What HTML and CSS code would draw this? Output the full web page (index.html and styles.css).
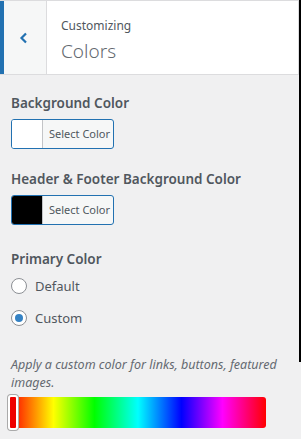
FILE: index.html
```html
<!DOCTYPE html>
<html lang="en">
<head>
<meta charset="UTF-8">
<title>Customizing Colors</title>
<link rel="stylesheet" href="styles.css">
</head>
<body>
<div class="panel">
<div class="header">
<button class="back" aria-label="Back">
<svg width="10" height="12" viewBox="0 0 10 12"><path d="M7 1.5 L2.5 6 L7 10.5" fill="none" stroke="#2271b1" stroke-width="2.2"/></svg>
</button>
<div class="title">
<span class="small">Customizing</span>
<span class="big">Colors</span>
</div>
</div>

<div class="controls">
<div class="control">
<span class="label">Background Color</span>
<button class="picker"><span class="swatch"></span><span class="pick-text">Select Color</span></button>
</div>
<div class="control wide-gap">
<span class="label">Header &amp; Footer Background Color</span>
<button class="picker"><span class="swatch black"></span><span class="pick-text">Select Color</span></button>
</div>
<div class="control radios">
<span class="label">Primary Color</span>
<label class="radio"><span class="dot"></span>Default</label>
<label class="radio"><span class="dot checked"></span>Custom</label>
</div>
<div class="control">
<p class="desc">Apply a custom color for links, buttons, featured images.</p>
<div class="hue">
<span class="handle"></span>
</div>
</div>
</div>
</div>
<div class="edge"></div>
</body>
</html>
```
FILE: styles.css
```css
body {
margin: 0;
background-color: #f0f0f1;
font-family: "Noto Sans", sans-serif;
color: #50575e;
display: flex;
height: 439px;
overflow: hidden;
}
.panel {
flex: 1;
}
.edge {
width: 2px;
height: 362px;
background-color: #000;
}
.header {
display: flex;
height: 73px;
border-top: 1px solid #dcdcde;
border-bottom: 1px solid #dcdcde;
border-right: 1px solid #dcdcde;
background-color: #fff;
}
.back {
width: 47px;
border: none;
border-left: 4px solid #2271b1;
border-right: 1px solid #dcdcde;
background-color: #f6f7f7;
display: flex;
align-items: center;
justify-content: center;
padding: 0 2px 0 0;
}
.title {
display: flex;
flex-direction: column;
padding: 16px 0 0 14px;
}
.small {
font-size: 12px;
line-height: 18px;
color: #50575e;
}
.big {
font-size: 19px;
font-weight: 300;
line-height: 33px;
color: #646970;
}
.controls {
padding: 18px 0 0 11px;
}
.control {
display: flex;
flex-direction: column;
align-items: flex-start;
margin-bottom: 20px;
}
.control.wide-gap {
margin-bottom: 24px;
}
.control.radios {
margin-bottom: 16px;
}
.label {
font-size: 13.5px;
font-weight: 600;
line-height: 20px;
margin-bottom: 6px;
color: #50575e;
}
.picker {
display: flex;
box-sizing: border-box;
height: 30px;
width: 103px;
padding: 0;
border: 1px solid #2271b1;
border-radius: 3px;
background-color: #f6f7f7;
overflow: hidden;
font-family: inherit;
}
.swatch {
width: 30px;
height: 100%;
background-color: #fff;
border-right: 1px solid #c3c4c7;
}
.swatch.black {
background-color: #000;
}
.pick-text {
font-size: 11px;
line-height: 28px;
color: #50575e;
padding-left: 6px;
}
.radio {
display: flex;
align-items: center;
gap: 8px;
font-size: 13px;
height: 20px;
margin-bottom: 12px;
}
.radios .label {
margin-bottom: 7px;
}
.dot {
width: 14px;
height: 14px;
border: 1px solid #8c8f94;
border-radius: 50%;
background-color: #fff;
display: flex;
align-items: center;
justify-content: center;
}
.dot.checked::after {
content: "";
width: 8px;
height: 8px;
border-radius: 50%;
background-color: #3582c4;
}
.desc {
margin: 0 0 5px 0;
font-size: 12.5px;
font-style: italic;
line-height: 18px;
color: #646970;
padding-right: 8px;
}
.hue {
position: relative;
width: 256px;
height: 31px;
margin-left: -1px;
border-radius: 3px;
background: linear-gradient(to right, #f00, #ff0 17%, #0f0 33%, #0ff 50%, #00f 67%, #f0f 83%, #f00);
}
.handle {
position: absolute;
left: -2px;
top: -2px;
width: 6px;
height: 31px;
border: 2px solid #fff;
border-radius: 3px;
box-shadow: 0 0 0 1px #aaa;
background-color: #e00;
}
```
